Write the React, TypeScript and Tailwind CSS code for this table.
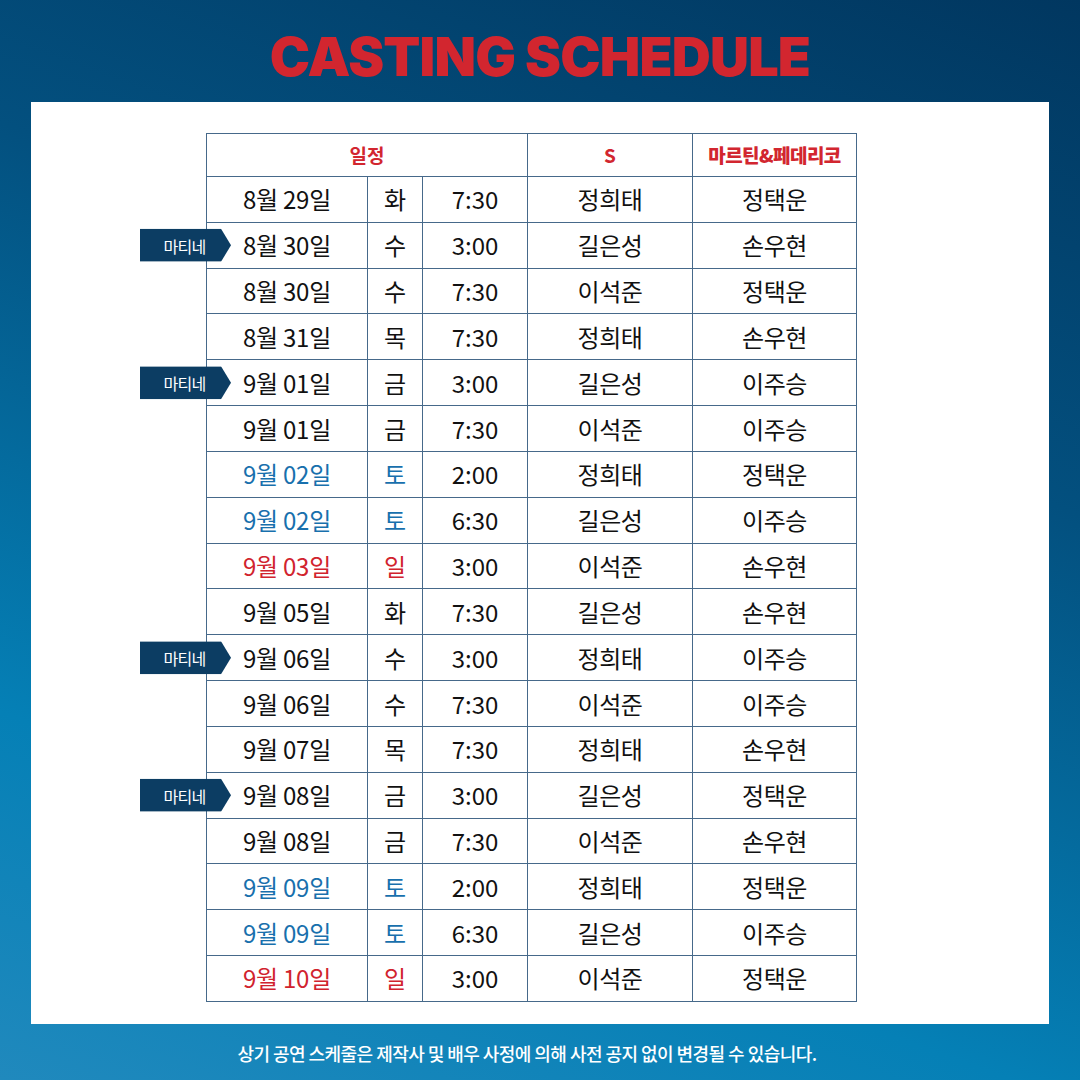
import React from 'react';

type Row = {
  date: string;
  day: string;
  time: string;
  s: string;
  mf: string;
  tone?: 'blue' | 'red';
  matinee?: boolean;
};

const rows: Row[] = [
  { date: '8월 29일', day: '화', time: '7:30', s: '정희태', mf: '정택운' },
  { date: '8월 30일', day: '수', time: '3:00', s: '길은성', mf: '손우현', matinee: true },
  { date: '8월 30일', day: '수', time: '7:30', s: '이석준', mf: '정택운' },
  { date: '8월 31일', day: '목', time: '7:30', s: '정희태', mf: '손우현' },
  { date: '9월 01일', day: '금', time: '3:00', s: '길은성', mf: '이주승', matinee: true },
  { date: '9월 01일', day: '금', time: '7:30', s: '이석준', mf: '이주승' },
  { date: '9월 02일', day: '토', time: '2:00', s: '정희태', mf: '정택운', tone: 'blue' },
  { date: '9월 02일', day: '토', time: '6:30', s: '길은성', mf: '이주승', tone: 'blue' },
  { date: '9월 03일', day: '일', time: '3:00', s: '이석준', mf: '손우현', tone: 'red' },
  { date: '9월 05일', day: '화', time: '7:30', s: '길은성', mf: '손우현' },
  { date: '9월 06일', day: '수', time: '3:00', s: '정희태', mf: '이주승', matinee: true },
  { date: '9월 06일', day: '수', time: '7:30', s: '이석준', mf: '이주승' },
  { date: '9월 07일', day: '목', time: '7:30', s: '정희태', mf: '손우현' },
  { date: '9월 08일', day: '금', time: '3:00', s: '길은성', mf: '정택운', matinee: true },
  { date: '9월 08일', day: '금', time: '7:30', s: '이석준', mf: '손우현' },
  { date: '9월 09일', day: '토', time: '2:00', s: '정희태', mf: '정택운', tone: 'blue' },
  { date: '9월 09일', day: '토', time: '6:30', s: '길은성', mf: '이주승', tone: 'blue' },
  { date: '9월 10일', day: '일', time: '3:00', s: '이석준', mf: '정택운', tone: 'red' },
];

const kr = "font-['Noto_Sans_CJK_KR','Noto_Sans',sans-serif]";
const cols = 'grid grid-cols-[160px_54px_104px_164px_163px] gap-px';
const cell = 'bg-white flex items-center justify-center';

const MatineeTag = () => (
  <div className="absolute left-[-67px] top-1/2 -translate-y-1/2 z-10 w-[91px] h-[33px] bg-[#0c3d63] [clip-path:polygon(0_0,81px_0,91px_50%,81px_100%,0_100%)] flex items-center justify-center pr-[2px]">
    <span className={`${kr} text-white text-[16px] tracking-[-0.04em] leading-none`}>마티네</span>
  </div>
);

export default function App() {
  return (
    <div className="w-[1080px] h-[1080px] flex flex-col bg-[linear-gradient(200deg,#013760_0%,#03507f_35%,#0580b6_75%,#2089bd_100%)]">
      {/* Title */}
      <div className="h-[102px] flex items-center justify-center pt-[12px]">
        <h1 className="font-['Inter',sans-serif] font-black text-[54px] leading-none tracking-[-0.015em] text-[#d2262f]">
          CASTING SCHEDULE
        </h1>
      </div>

      {/* Panel */}
      <div className="mx-[31px] h-[922px] bg-white pt-[31px] pl-[175px]">
        <div className="w-[651px] h-[869px] bg-[#46698a] p-px flex flex-col gap-px">
          <div className={`${cols} h-[42px] shrink-0`}>
            <div className={`${cell} col-span-3`}>
              <span className={`${kr} font-bold text-[19px] text-[#d2262f]`}>일정</span>
            </div>
            <div className={cell}>
              <span className={`${kr} font-bold text-[19px] text-[#d2262f]`}>S</span>
            </div>
            <div className={cell}>
              <span className={`${kr} font-black text-[19px] tracking-[-0.03em] text-[#d2262f]`}>마르틴&amp;페데리코</span>
            </div>
          </div>
          {rows.map((r, i) => {
            const tone =
              r.tone === 'blue' ? 'text-[#1870ad]' : r.tone === 'red' ? 'text-[#d1232e]' : 'text-[#111111]';
            return (
              <div key={i} className={`${cols} flex-1 relative`}>
                {r.matinee && <MatineeTag />}
                <div className={cell}>
                  <span className={`${kr} text-[24px] tracking-[-0.01em] ${tone}`}>{r.date}</span>
                </div>
                <div className={cell}>
                  <span className={`${kr} text-[24px] ${tone}`}>{r.day}</span>
                </div>
                <div className={cell}>
                  <span className={`${kr} text-[24px] text-[#111111]`}>{r.time}</span>
                </div>
                <div className={cell}>
                  <span className={`${kr} text-[24px] tracking-[-0.02em] text-[#111111]`}>{r.s}</span>
                </div>
                <div className={cell}>
                  <span className={`${kr} text-[24px] tracking-[-0.02em] text-[#111111]`}>{r.mf}</span>
                </div>
              </div>
            );
          })}
        </div>
      </div>

      {/* Footer */}
      <div className="flex-1 flex items-center justify-center pt-[2px] pr-[26px]">
        <p className={`${kr} font-medium text-white text-[18px] tracking-[-0.03em]`}>
          상기 공연 스케줄은 제작사 및 배우 사정에 의해 사전 공지 없이 변경될 수 있습니다.
        </p>
      </div>
    </div>
  );
}
